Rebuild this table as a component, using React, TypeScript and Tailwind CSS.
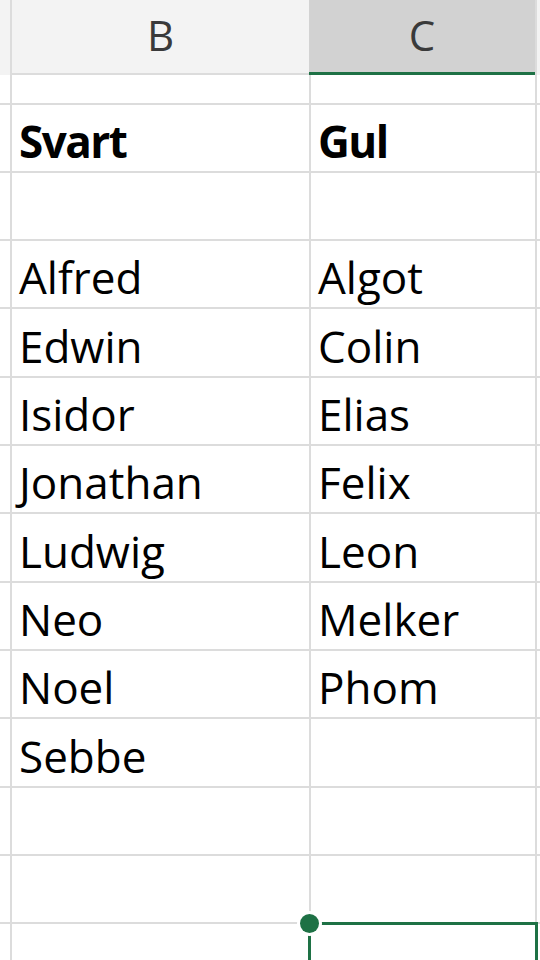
const rows = [
  { h: "h-[30px]", b: "", c: "" },
  { h: "h-[68px]", b: "Svart", c: "Gul", bold: true },
  { h: "h-[68px]", b: "", c: "" },
  { h: "h-[68px]", b: "Alfred", c: "Algot" },
  { h: "h-[69px]", b: "Edwin", c: "Colin" },
  { h: "h-[68px]", b: "Isidor", c: "Elias" },
  { h: "h-[68px]", b: "Jonathan", c: "Felix" },
  { h: "h-[69px]", b: "Ludwig", c: "Leon" },
  { h: "h-[68px]", b: "Neo", c: "Melker" },
  { h: "h-[68px]", b: "Noel", c: "Phom" },
  { h: "h-[69px]", b: "Sebbe", c: "" },
  { h: "h-[68px]", b: "", c: "" },
  { h: "h-[68px]", b: "", c: "" },
];

const line = "border-[#dcdcdc]";

const Cell = ({ text, bold, width }: { text: string; bold?: boolean; width: string }) => (
  <div
    className={`${width} shrink-0 flex items-end pl-[7px] pb-[8px] border-r-2 border-b-2 ${line} text-[44px] leading-none text-black ${
      bold ? "font-bold tracking-[-1.5px]" : "font-normal"
    }`}
  >
    {text}
  </div>
);

export default function App() {
  return (
    <div className="relative w-[540px] h-[960px] overflow-hidden bg-white font-['Open_Sans',sans-serif]">
      {/* column headers */}
      <div className="flex h-[75px]">
        <div className={`w-[12px] shrink-0 bg-[#f3f3f3] border-r-2 ${line}`} />
        <div className={`w-[297px] shrink-0 flex items-center justify-center pb-[3px] bg-[#f3f3f3] border-b-2 ${line} text-[42px] leading-none text-[#3a3a3a]`}>
          B
        </div>
        <div className="w-[226px] shrink-0 flex items-center justify-center pb-[3px] bg-[#d2d2d2] border-b-[3px] border-[#1e7145] text-[42px] leading-none text-[#3a3a3a]">
          C
        </div>
        <div className={`flex-1 bg-[#f3f3f3] border-l-2 ${line}`} />
      </div>

      {rows.map((r, i) => (
        <div key={i} className={`flex ${r.h}`}>
          <div className={`w-[12px] shrink-0 border-r-2 border-b-2 ${line}`} />
          <Cell text={r.b} bold={r.bold} width="w-[299px]" />
          <Cell text={r.c} bold={r.bold} width="w-[226px]" />
          <div className={`flex-1 border-b-2 ${line}`} />
        </div>
      ))}

      <div className="flex h-[40px]">
        <div className={`w-[12px] shrink-0 border-r-2 ${line}`} />
        <div className={`w-[299px] shrink-0 border-r-2 ${line}`} />
        <div className={`w-[226px] shrink-0 border-r-2 ${line}`} />
        <div className="flex-1" />
      </div>

      {/* selected cell */}
      <div className="absolute left-[308px] top-[922px] w-[230px] h-[60px] border-[3px] border-[#1e7145]" />
      <div className="absolute left-[300px] top-[914px] w-[19px] h-[19px] rounded-full bg-[#1e7145] ring-[3px] ring-white" />
    </div>
  );
}
